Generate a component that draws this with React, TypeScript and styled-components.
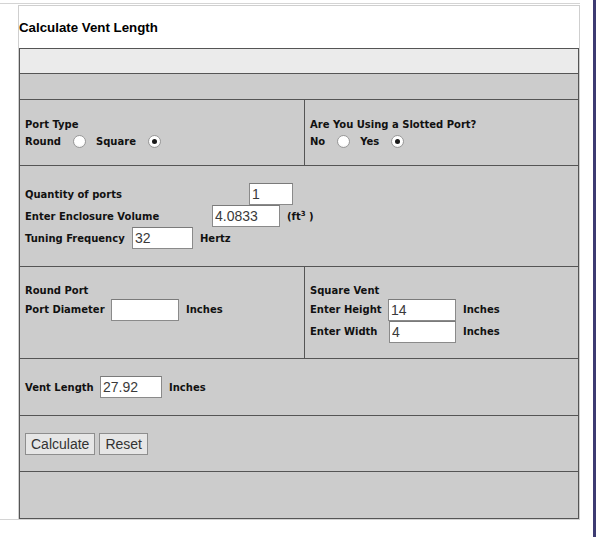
import styled, { createGlobalStyle } from "styled-components";

const GlobalStyle = createGlobalStyle`
  * { box-sizing: border-box; }
  body {
    margin: 0;
    background: #fff;
    font-family: "DejaVu Sans", Verdana, sans-serif;
  }
`;

const Page = styled.div`
  display: flex;
  width: 596px;
  height: 537px;
  overflow: hidden;
`;

const Main = styled.div`
  width: 580px;
  padding-top: 3px;
`;

const EdgeBar = styled.div`
  width: 3px;
  margin-left: auto;
  background: #3d3b72;
`;

const Frame = styled.div`
  display: flex;
  border-top: 1px solid #d4d4d4;
  border-bottom: 1px solid #d4d4d4;
`;

const Gutter = styled.div`
  width: 18px;
`;

const Panel = styled.div`
  width: 562px;
  margin-top: 1px;
  border: 1px solid #cfcfcf;
  border-bottom: none;
  background: #fff;
`;

const Title = styled.h3`
  margin: 0;
  height: 42px;
  display: flex;
  align-items: center;
  padding-top: 1px;
  font: bold 13.3px "Liberation Sans", Arial, sans-serif;
  color: #000;
`;

const Table = styled.div`
  border: 1px solid #555;
  background: #ccc;
`;

const Row = styled.div<{ $h: number; $light?: boolean; $split?: boolean }>`
  height: ${(p) => p.$h}px;
  background: ${(p) => (p.$light ? "#ebebeb" : "#cccccc")};
  border-bottom: 1px solid #555;
  display: grid;
  grid-template-columns: ${(p) => (p.$split ? "284px 1fr" : "1fr")};

  &:last-child {
    border-bottom: none;
  }
`;

const Cell = styled.div<{ $divider?: boolean }>`
  display: flex;
  flex-direction: column;
  justify-content: center;
  padding: 0 5px;
  border-left: ${(p) => (p.$divider ? "1px solid #555" : "none")};
`;

const Line = styled.div<{ $h?: number }>`
  display: flex;
  align-items: center;
  height: ${(p) => p.$h ?? 22}px;
  font-size: 10px;
  font-weight: bold;
  color: #111;
  white-space: nowrap;
`;

const Label = styled.span<{ $w?: number }>`
  display: inline-block;
  width: ${(p) => (p.$w ? `${p.$w}px` : "auto")};
  flex-shrink: 0;
`;

const Unit = styled.span`
  margin-left: 7px;
`;

const TextInput = styled.input<{ $w: number }>`
  width: ${(p) => p.$w}px;
  height: 22px;
  padding: 0 2px;
  border: 1px solid #8a8a8a;
  border-top-color: #7a7a7a;
  background: #fff;
  font: 14px "Liberation Sans", Arial, sans-serif;
  color: #3a3a3a;
  outline: none;
`;

const Radio = styled.input.attrs({ type: "radio" })`
  appearance: none;
  width: 13px;
  height: 13px;
  margin: 0 10px 0 12px;
  border: 1px solid #999;
  border-radius: 50%;
  background: radial-gradient(circle at 50% 35%, #fff 55%, #e6e6e6 100%);
  display: grid;
  place-items: center;

  &:checked::after {
    content: "";
    width: 5px;
    height: 5px;
    border-radius: 50%;
    background: #1a1a1a;
  }
`;

const Actions = styled.div`
  display: flex;
  gap: 4px;
`;

const Button = styled.button`
  height: 22px;
  padding: 0 5px;
  border: 1px solid #8e8e8e;
  background: #e6e6e6;
  font: 14px "Liberation Sans", Arial, sans-serif;
  color: #333;
`;

export default function App() {
  return (
    <>
      <GlobalStyle />
      <Page>
        <Main>
          <Frame>
            <Gutter />
            <Panel>
              <Title>Calculate Vent Length</Title>
              <Table>
                <Row $h={25} $light />
                <Row $h={26} />
                <Row $h={66} $split>
                  <Cell>
                    <Line $h={17}>Port Type</Line>
                    <Line $h={17}>
                      Round <Radio name="ptype" /> Square{" "}
                      <Radio name="ptype" defaultChecked />
                    </Line>
                  </Cell>
                  <Cell $divider>
                    <Line $h={17}>Are You Using a Slotted Port?</Line>
                    <Line $h={17}>
                      No <Radio name="slot" /> Yes{" "}
                      <Radio name="slot" defaultChecked />
                    </Line>
                  </Cell>
                </Row>
                <Row $h={101}>
                  <Cell>
                    <Line>
                      <Label $w={224}>Quantity of ports</Label>
                      <TextInput $w={44} defaultValue="1" />
                    </Line>
                    <Line>
                      <Label $w={187}>Enter Enclosure Volume</Label>
                      <TextInput $w={68} defaultValue="4.0833" />
                      <Unit>
                        (ft<sup style={{ fontSize: 7 }}>3</sup> )
                      </Unit>
                    </Line>
                    <Line>
                      <Label $w={107}>Tuning Frequency</Label>
                      <TextInput $w={61} defaultValue="32" />
                      <Unit>Hertz</Unit>
                    </Line>
                  </Cell>
                </Row>
                <Row $h={92} $split>
                  <Cell>
                    <Line $h={16}>Round Port</Line>
                    <Line>
                      <Label $w={86}>Port Diameter</Label>
                      <TextInput $w={68} defaultValue="" />
                      <Unit>Inches</Unit>
                    </Line>
                    <Line />
                  </Cell>
                  <Cell $divider>
                    <Line $h={16}>Square Vent</Line>
                    <Line>
                      <Label $w={78}>Enter Height</Label>
                      <TextInput $w={68} defaultValue="14" />
                      <Unit>Inches</Unit>
                    </Line>
                    <Line>
                      <Label $w={79}>Enter Width</Label>
                      <TextInput $w={67} defaultValue="4" />
                      <Unit>Inches</Unit>
                    </Line>
                  </Cell>
                </Row>
                <Row $h={57}>
                  <Cell>
                    <Line>
                      <Label $w={75}>Vent Length</Label>
                      <TextInput $w={62} defaultValue="27.92" />
                      <Unit>Inches</Unit>
                    </Line>
                  </Cell>
                </Row>
                <Row $h={56}>
                  <Cell>
                    <Actions>
                      <Button type="button">Calculate</Button>
                      <Button type="button">Reset</Button>
                    </Actions>
                  </Cell>
                </Row>
                <Row $h={46} />
              </Table>
            </Panel>
          </Frame>
        </Main>
        <EdgeBar />
      </Page>
    </>
  );
}
